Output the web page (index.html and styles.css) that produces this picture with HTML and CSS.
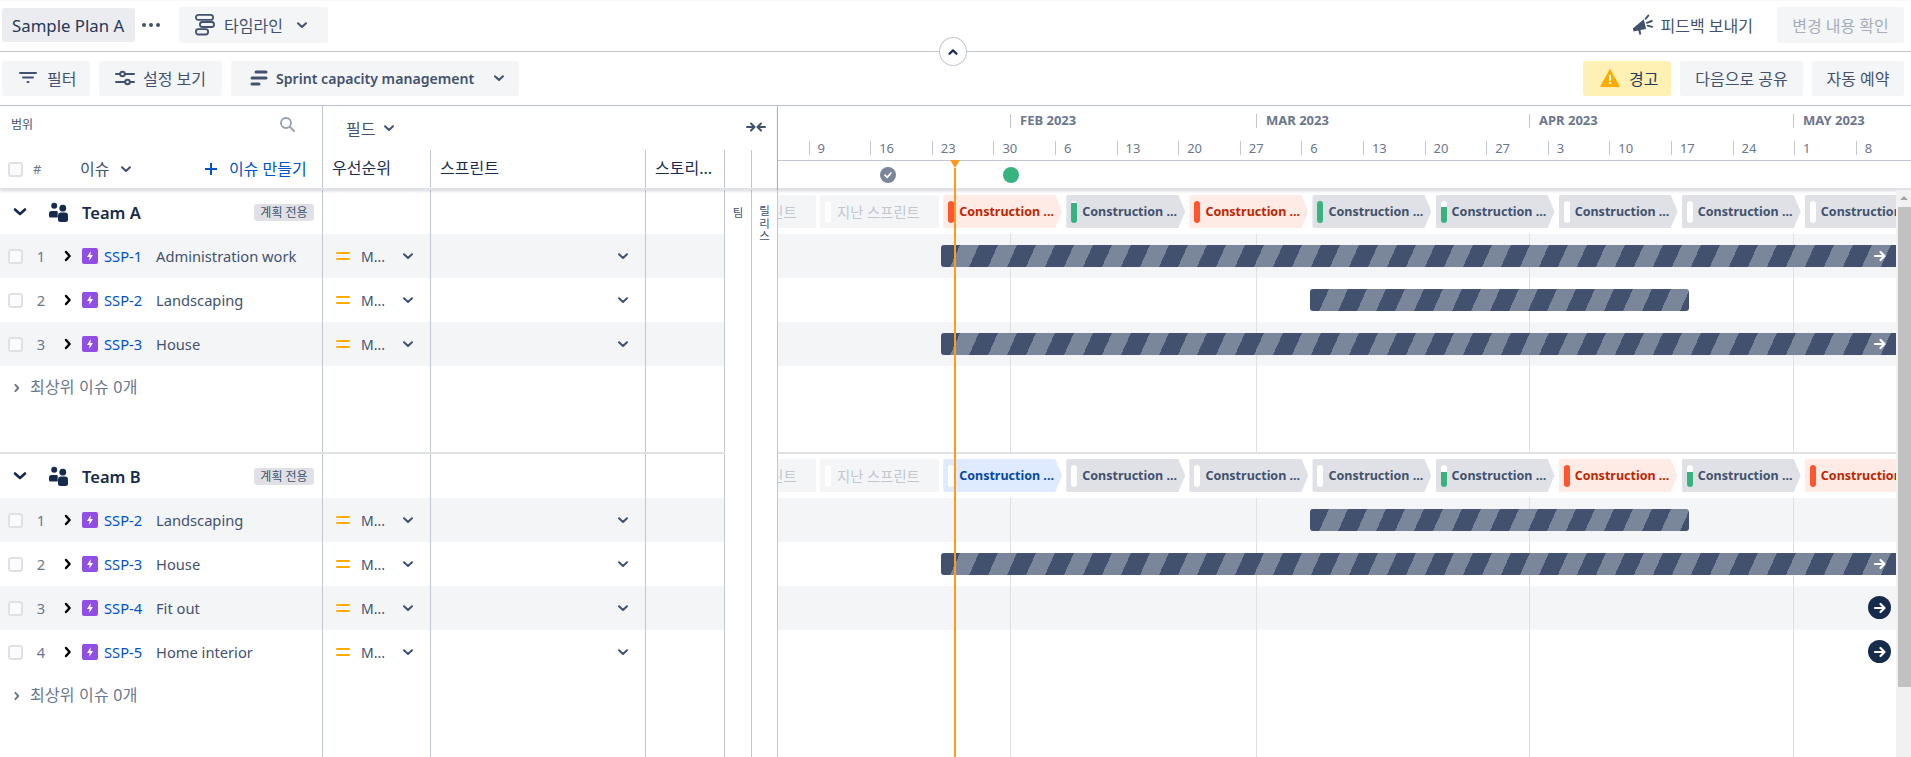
FILE: index.html
```html
<!DOCTYPE html>
<html lang="ko">
<head>
<meta charset="utf-8">
<title>Sample Plan A</title>
<link rel="stylesheet" href="styles.css">
</head>
<body>
<svg class="defs" width="0" height="0" aria-hidden="true">
  <symbol id="down" viewBox="0 0 16 16"><path d="M4 6.200 8 10l4-3.800" fill="none" stroke="currentColor" stroke-width="2" stroke-linecap="round" stroke-linejoin="round"/></symbol>
  <symbol id="team-down" viewBox="0 0 16 16"><path d="M3 5.500 8 10l5-4.500" fill="none" stroke="currentColor" stroke-width="2.600" stroke-linecap="round" stroke-linejoin="round"/></symbol>
  <symbol id="right" viewBox="0 0 8 12"><path d="M2 2l3.600 4L2 10" fill="none" stroke="currentColor" stroke-width="2.400" stroke-linecap="round" stroke-linejoin="round"/></symbol>
  <symbol id="bolt" viewBox="0 0 16 16"><rect width="16" height="16" rx="2" fill="#904ee2"/><path d="M8.900 3 5 9h2.600l-.5 4L11 7H8.400z" fill="#fff"/></symbol>
  <symbol id="eq" viewBox="0 0 14 12"><path d="M1 3h12M1 9h12" stroke="#ffab00" stroke-width="2" stroke-linecap="round"/></symbol>
  <symbol id="people" viewBox="0 0 20 20"><circle cx="5.200" cy="3.800" r="3" fill="#172b4d"/><circle cx="13.800" cy="6.200" r="3.400" fill="#172b4d"/><path d="M0 11.500a2.500 2.500 0 0 1 2.500-2.500h5.300c.6 0 .9.3.9.9v5.600H1.500A1.500 1.500 0 0 1 0 14z" fill="#172b4d"/><path d="M9 13.500a3 3 0 0 1 3-3h4a3 3 0 0 1 3 3v4a2.500 2.500 0 0 1-2.500 2.500h-5A2.500 2.500 0 0 1 9 17.500z" fill="#172b4d"/></symbol>
  <symbol id="arrow" viewBox="0 0 14 14"><path d="M2 7h9M7.500 3l4 4-4 4" fill="none" stroke="currentColor" stroke-width="2.200" stroke-linecap="round" stroke-linejoin="round"/></symbol>
</svg>

<header class="topbar">
  <div class="bar-side">
    <span class="btn plan-name">Sample Plan A</span>
    <span class="dots"><i></i><i></i><i></i></span>
    <span class="btn view-btn">
      <svg class="ic-timeline" viewBox="0 0 20 22"><g fill="none" stroke="#42526e" stroke-width="1.800"><rect x=".9" y=".9" width="17.200" height="5" rx="2.500"/><rect x="4.900" y="8" width="14.200" height="5" rx="2.500"/><rect x=".9" y="15.100" width="12.200" height="5.400" rx="2.500"/></g></svg>
      <span>타임라인</span>
      <svg class="ic16"><use href="#down"/></svg>
    </span>
  </div>
  <div class="bar-side">
    <span class="feedback">
      <svg class="ic-mega" viewBox="0 0 22 22"><path d="M.8 14.500 11.800 5.200l2.300 9.800-5.700 1.100.9 4.200-1.900.5-1.100-4.300-4.600.9z" fill="#42526e"/><path d="M14.800 8.800l5-1.800M13.600 4.800l2.700-3.200M15.600 11.600l4.600 1.200" stroke="#42526e" stroke-width="1.900" stroke-linecap="round"/></svg>
      <span>피드백 보내기</span>
    </span>
    <span class="btn review-btn">변경 내용 확인</span>
  </div>
</header>

<button class="collapse" type="button"><svg class="ic16" viewBox="0 0 16 16"><path d="M4.500 9.800 8 6.400l3.500 3.400" fill="none" stroke="#172b4d" stroke-width="2.200" stroke-linecap="round" stroke-linejoin="round"/></svg></button>

<section class="toolbar">
  <div class="bar-side tools-left">
    <span class="btn tool filter-btn"><svg class="ic-tool" viewBox="0 0 18 14"><path d="M1 2h16M4 6.500h10M8.500 11h1" stroke="#42526e" stroke-width="2" stroke-linecap="round"/></svg><span>필터</span></span>
    <span class="btn tool settings-btn"><svg class="ic-set" viewBox="0 0 20 16"><g fill="none" stroke="#42526e" stroke-width="2"><path d="M1 4h4M10 4h9M1 12h9M15 12h4" stroke-linecap="round"/><circle cx="7.500" cy="4" r="2.300"/><circle cx="12.500" cy="12" r="2.300"/></g></svg><span>설정 보기</span></span>
    <span class="btn tool capacity-btn"><svg class="ic-plan" viewBox="0 0 18 18"><path d="M6 3h10M2 9h14M2 15h7" stroke="#42526e" stroke-width="3" stroke-linecap="round"/></svg><span>Sprint capacity management</span><svg class="ic16"><use href="#down"/></svg></span>
  </div>
  <div class="bar-side tools-right">
    <span class="btn warn-btn"><svg class="ic-warn" viewBox="0 0 20 20"><path d="M10 1.500 19.300 18.500H.7z" fill="#ffab00" stroke="#ffab00" stroke-linejoin="round"/><path d="M10 7v5.500" stroke="#fff" stroke-width="2"/><circle cx="10" cy="15" r="1.200" fill="#fff"/></svg><span>경고</span></span>
    <span class="btn share-btn">다음으로 공유</span>
    <span class="btn auto-btn">자동 예약</span>
  </div>
</section>

<main class="main">
  <div class="tree">
    <div class="tree-head">
      <div class="head-top">
        <div class="scope"><span class="scope-label">범위</span><svg class="ic-search" viewBox="0 0 16 16"><circle cx="7" cy="7" r="5" fill="none" stroke="#97a0af" stroke-width="1.800"/><path d="m11 11 4 4" stroke="#97a0af" stroke-width="1.800" stroke-linecap="round"/></svg></div>
        <div class="fields"><span class="fields-btn"><span>필드</span><svg class="ic16"><use href="#down"/></svg></span><svg class="ic-collapse" viewBox="0 0 20 12"><path d="M1 6h7M5 2.500 8.500 6 5 9.500M19 6h-7M15 2.500 11.500 6l3.500 3.500" fill="none" stroke="#42526e" stroke-width="2" stroke-linecap="round" stroke-linejoin="round"/></svg></div>
      </div>
      <div class="head-cols">
        <div class="hcell h-issue"><span class="check"></span><span class="hash">#</span><span class="issue-sort"><span>이슈</span><svg class="ic16"><use href="#down"/></svg></span><span class="create"><svg class="ic-plus" viewBox="0 0 14 14"><path d="M7 1v12M1 7h12" stroke="#0052cc" stroke-width="2"/></svg><span>이슈 만들기</span></span></div>
        <div class="hcell">우선순위</div>
        <div class="hcell">스프린트</div>
        <div class="hcell">스토리...</div>
        <div class="hcell h-narrow"></div>
        <div class="hcell h-narrow2"></div>
      </div>
    </div>

    <div class="group group-a">
      <div class="group-rows">
        <div class="row team-row"><div class="cell c-issue"><svg class="team-chev"><use href="#team-down"/></svg><svg class="ic-people"><use href="#people"/></svg><span class="team-name">Team A</span><span class="badge">계획 전용</span></div><div class="cell"></div><div class="cell"></div><div class="cell"></div></div>
        <div class="row alt"><div class="cell c-issue"><span class="check"></span><span class="num">1</span><svg class="expand"><use href="#right"/></svg><svg class="ic-bolt"><use href="#bolt"/></svg><span class="key">SSP-1</span><span class="title">Administration work</span></div><div class="cell c-prio"><svg class="ic-eq"><use href="#eq"/></svg><span class="prio">M...</span><svg class="ic16 end"><use href="#down"/></svg></div><div class="cell c-sprint"><svg class="ic16 end"><use href="#down"/></svg></div><div class="cell"></div></div>
        <div class="row"><div class="cell c-issue"><span class="check"></span><span class="num">2</span><svg class="expand"><use href="#right"/></svg><svg class="ic-bolt"><use href="#bolt"/></svg><span class="key">SSP-2</span><span class="title">Landscaping</span></div><div class="cell c-prio"><svg class="ic-eq"><use href="#eq"/></svg><span class="prio">M...</span><svg class="ic16 end"><use href="#down"/></svg></div><div class="cell c-sprint"><svg class="ic16 end"><use href="#down"/></svg></div><div class="cell"></div></div>
        <div class="row alt"><div class="cell c-issue"><span class="check"></span><span class="num">3</span><svg class="expand"><use href="#right"/></svg><svg class="ic-bolt"><use href="#bolt"/></svg><span class="key">SSP-3</span><span class="title">House</span></div><div class="cell c-prio"><svg class="ic-eq"><use href="#eq"/></svg><span class="prio">M...</span><svg class="ic16 end"><use href="#down"/></svg></div><div class="cell c-sprint"><svg class="ic16 end"><use href="#down"/></svg></div><div class="cell"></div></div>
        <div class="row"><div class="cell c-issue"><svg class="more-chev"><use href="#right"/></svg><span class="more">최상위 이슈 0개</span></div><div class="cell"></div><div class="cell"></div><div class="cell"></div></div>
        <div class="row filler"><div class="cell"></div><div class="cell"></div><div class="cell"></div><div class="cell"></div></div>
      </div>
      <div class="label-col first"><span class="label-team">팀</span></div>
      <div class="label-col"><span class="label-release">릴리스</span></div>
    </div>

    <div class="group group-b">
      <div class="group-rows divided">
        <div class="row team-row"><div class="cell c-issue"><svg class="team-chev"><use href="#team-down"/></svg><svg class="ic-people"><use href="#people"/></svg><span class="team-name">Team B</span><span class="badge">계획 전용</span></div><div class="cell"></div><div class="cell"></div><div class="cell"></div></div>
        <div class="row alt"><div class="cell c-issue"><span class="check"></span><span class="num">1</span><svg class="expand"><use href="#right"/></svg><svg class="ic-bolt"><use href="#bolt"/></svg><span class="key">SSP-2</span><span class="title">Landscaping</span></div><div class="cell c-prio"><svg class="ic-eq"><use href="#eq"/></svg><span class="prio">M...</span><svg class="ic16 end"><use href="#down"/></svg></div><div class="cell c-sprint"><svg class="ic16 end"><use href="#down"/></svg></div><div class="cell"></div></div>
        <div class="row"><div class="cell c-issue"><span class="check"></span><span class="num">2</span><svg class="expand"><use href="#right"/></svg><svg class="ic-bolt"><use href="#bolt"/></svg><span class="key">SSP-3</span><span class="title">House</span></div><div class="cell c-prio"><svg class="ic-eq"><use href="#eq"/></svg><span class="prio">M...</span><svg class="ic16 end"><use href="#down"/></svg></div><div class="cell c-sprint"><svg class="ic16 end"><use href="#down"/></svg></div><div class="cell"></div></div>
        <div class="row alt"><div class="cell c-issue"><span class="check"></span><span class="num">3</span><svg class="expand"><use href="#right"/></svg><svg class="ic-bolt"><use href="#bolt"/></svg><span class="key">SSP-4</span><span class="title">Fit out</span></div><div class="cell c-prio"><svg class="ic-eq"><use href="#eq"/></svg><span class="prio">M...</span><svg class="ic16 end"><use href="#down"/></svg></div><div class="cell c-sprint"><svg class="ic16 end"><use href="#down"/></svg></div><div class="cell"></div></div>
        <div class="row"><div class="cell c-issue"><span class="check"></span><span class="num">4</span><svg class="expand"><use href="#right"/></svg><svg class="ic-bolt"><use href="#bolt"/></svg><span class="key">SSP-5</span><span class="title">Home interior</span></div><div class="cell c-prio"><svg class="ic-eq"><use href="#eq"/></svg><span class="prio">M...</span><svg class="ic16 end"><use href="#down"/></svg></div><div class="cell c-sprint"><svg class="ic16 end"><use href="#down"/></svg></div><div class="cell"></div></div>
        <div class="row"><div class="cell c-issue"><svg class="more-chev"><use href="#right"/></svg><span class="more">최상위 이슈 0개</span></div><div class="cell"></div><div class="cell"></div><div class="cell"></div></div>
        <div class="row filler"><div class="cell"></div><div class="cell"></div><div class="cell"></div><div class="cell"></div></div>
      </div>
      <div class="label-col first"></div>
      <div class="label-col"></div>
    </div>
  </div>

  <div class="gantt">
    <div class="gantt-head">
      <div class="months">
        <span class="month" style="width:246px">FEB 2023</span>
        <span class="month" style="width:273px">MAR 2023</span>
        <span class="month" style="width:264px">APR 2023</span>
        <span class="month" style="width:100px">MAY 2023</span>
      </div>
      <div class="weeks">
        <span class="week">9</span><span class="week">16</span><span class="week">23</span><span class="week">30</span><span class="week">6</span><span class="week">13</span><span class="week">20</span><span class="week">27</span><span class="week">6</span><span class="week">13</span><span class="week">20</span><span class="week">27</span><span class="week">3</span><span class="week">10</span><span class="week">17</span><span class="week">24</span><span class="week">1</span><span class="week">8</span>
      </div>
      <div class="markers">
        <span class="marker done"><svg viewBox="0 0 10 10"><path d="M2 5.200 4.200 7.400 8 3" fill="none" stroke="#fff" stroke-width="1.800" stroke-linecap="round" stroke-linejoin="round"/></svg></span>
        <span class="marker current"></span>
      </div>
    </div>
    <div class="today-tip"></div>
    <div class="today-line"></div>

    <div class="gantt-body">
      <div class="gantt-content">
        <div class="gantt-group group-a">
          <div class="chips">
            <span class="chip past"><i class="pip"></i>지난 스프린트</span>
            <span class="chip past"><i class="pip"></i>지난 스프린트</span>
            <span class="chip red"><i class="pip"></i>Construction ...</span>
            <span class="chip gray"><i class="pip g90"></i>Construction ...</span>
            <span class="chip red"><i class="pip"></i>Construction ...</span>
            <span class="chip gray"><i class="pip g100"></i>Construction ...</span>
            <span class="chip gray"><i class="pip g80"></i>Construction ...</span>
            <span class="chip gray"><i class="pip"></i>Construction ...</span>
            <span class="chip gray"><i class="pip"></i>Construction ...</span>
            <span class="chip gray"><i class="pip"></i>Construction ...</span>
          </div>
          <div class="lanes">
            <i class="gridline" style="left:232px"></i><i class="gridline" style="left:478px"></i><i class="gridline" style="left:751px"></i><i class="gridline" style="left:1015px"></i>
            <div class="lane alt"><div class="bar to-end" style="left:163px"><svg class="bar-arrow"><use href="#arrow"/></svg></div></div>
            <div class="lane"><div class="bar" style="left:532px;width:379px"></div></div>
            <div class="lane alt"><div class="bar to-end" style="left:163px"><svg class="bar-arrow"><use href="#arrow"/></svg></div></div>
          </div>
        </div>
        <div class="gantt-group group-b divided">
          <div class="chips">
            <span class="chip past"><i class="pip"></i>지난 스프린트</span>
            <span class="chip past"><i class="pip"></i>지난 스프린트</span>
            <span class="chip blue"><i class="pip"></i>Construction ...</span>
            <span class="chip gray"><i class="pip"></i>Construction ...</span>
            <span class="chip gray"><i class="pip"></i>Construction ...</span>
            <span class="chip gray"><i class="pip"></i>Construction ...</span>
            <span class="chip gray"><i class="pip g70"></i>Construction ...</span>
            <span class="chip red"><i class="pip"></i>Construction ...</span>
            <span class="chip gray"><i class="pip g70"></i>Construction ...</span>
            <span class="chip red"><i class="pip"></i>Construction ...</span>
          </div>
          <div class="lanes">
            <i class="gridline" style="left:232px"></i><i class="gridline" style="left:478px"></i><i class="gridline" style="left:751px"></i><i class="gridline" style="left:1015px"></i>
            <div class="lane alt"><div class="bar" style="left:532px;width:379px"></div></div>
            <div class="lane"><div class="bar to-end" style="left:163px"><svg class="bar-arrow"><use href="#arrow"/></svg></div></div>
            <div class="lane alt"><span class="round-arrow"><svg><use href="#arrow"/></svg></span></div>
            <div class="lane"><span class="round-arrow"><svg><use href="#arrow"/></svg></span></div>
          </div>
        </div>
      </div>
      <div class="scrollbar"><span class="scroll-up"></span><span class="scroll-thumb"></span></div>
    </div>
  </div>
</main>
</body>
</html>
```

FILE: styles.css
```css
* { box-sizing: border-box; }
html, body { margin: 0; height: 757px; overflow: hidden; background: #fff; }
body { font-family: "Noto Sans", "Noto Sans CJK KR", sans-serif; font-size: 14.700px; color: #42526e; position: relative; }
.defs { display: block; height: 0; }
svg { display: block; flex: none; }
i { font-style: normal; }
.ic16 { width: 16px; height: 16px; color: #42526e; }

/* Top bars */
.topbar { height: 52px; border-top: 1px solid #f7f8f9; border-bottom: 1px solid #c1c7d0; display: flex; justify-content: space-between; align-items: center; padding: 0 7px 2px 2px; }
.toolbar { height: 54px; border-bottom: 1px solid #c1c7d0; display: flex; justify-content: space-between; align-items: center; padding: 0 7px 1px 2px; }
.bar-side { display: flex; align-items: center; }
.btn { display: flex; align-items: center; border-radius: 3px; background: #f4f5f7; color: #42526e; white-space: nowrap; }
.plan-name { width: 133px; height: 34px; background: #ebecf0; padding-left: 10px; font-size: 16.800px; color: #253858; }
.dots { display: flex; gap: 3px; width: 44px; padding-left: 7px; }
.dots i { width: 4px; height: 4px; border-radius: 50%; background: #42526e; }
.view-btn { width: 149px; height: 36px; padding-left: 16px; font-size: 16px; gap: 9px; }
.ic-timeline { width: 20px; height: 22px; }
.view-btn span { width: 61px; }
.feedback { display: flex; align-items: center; gap: 7px; margin-right: 24px; color: #42526e; font-size: 16px; }
.ic-mega { width: 22px; height: 22px; }
.review-btn { width: 127px; height: 36px; justify-content: center; color: #a5adba; font-size: 16px; }
.tools-left { gap: 9px; }
.tools-right { gap: 9px; }
.tool { height: 35px; font-size: 16px; }
.filter-btn { width: 88px; padding-left: 17px; gap: 10px; }
.ic-tool { width: 18px; height: 14px; }
.settings-btn { width: 123px; padding-left: 16px; gap: 8px; }
.ic-set { width: 20px; height: 16px; }
.capacity-btn { width: 288px; padding-left: 19px; gap: 8px; font-weight: 600; font-size: 14.100px; }
.capacity-btn .ic16 { margin-left: 9px; }
.ic-plan { width: 18px; height: 18px; }
.warn-btn { width: 88px; height: 35px; background: #fff0b3; padding-left: 17px; gap: 9px; color: #253858; font-size: 16px; }
.ic-warn { width: 20px; height: 20px; }
.share-btn { width: 123px; height: 35px; justify-content: center; font-size: 16px; }
.auto-btn { width: 92px; height: 35px; justify-content: center; font-size: 16px; }
.collapse { position: absolute; left: 939px; top: 37px; width: 28px; height: 29px; padding: 0; border: 1px solid #c1c7d0; border-radius: 50%; background: #fff; display: flex; align-items: center; justify-content: center; z-index: 5; }

/* Layout */
.main { display: flex; height: 651px; }
.tree { width: 778px; flex: none; border-right: 1px solid #c1c7d0; display: flex; flex-direction: column; }
.gantt { flex: 1; min-width: 0; display: flex; flex-direction: column; position: relative; }

/* Tree header */
.tree-head { height: 84px; border-bottom: 2px solid #dfe1e6; box-shadow: 0 1px 3px rgba(9,30,66,.18); position: relative; z-index: 2; background: #fff; }
.head-top { height: 44px; display: flex; }
.scope { width: 323px; border-right: 1px solid #c1c7d0; display: flex; align-items: flex-start; justify-content: space-between; padding: 9px 27px 0 11px; }
.scope-label { font-size: 12px; line-height: 20px; color: #42526e; }
.ic-search { width: 16px; height: 16px; margin-top: 1px; }
.fields { flex: 1; display: flex; justify-content: space-between; padding: 12px 11px 0 23px; }
.fields-btn { display: flex; gap: 6px; align-items: center; height: 20px; font-size: 16px; color: #42526e; }
.ic-collapse { width: 20px; height: 12px; margin-top: 3px; }
.head-cols, .row { display: grid; grid-template-columns: 323px 108px 215px 79px; }
.head-cols { grid-template-columns: 323px 108px 215px 79px 27px 26px; height: 38px; }
.hcell { border-right: 1px solid #c1c7d0; padding: 0 9px; font-size: 16px; line-height: 36px; color: #172b4d; white-space: nowrap; overflow: hidden; }
.hcell:last-child { border-right: 0; }
.h-issue { display: flex; align-items: center; padding: 0 0 0 8px; color: #42526e; }
.hash { width: 47px; margin-left: 10px; font-size: 13px; color: #6b778c; }
.issue-sort { display: flex; align-items: center; gap: 9px; width: 124px; }
.create { display: flex; align-items: center; gap: 11px; color: #0052cc; white-space: nowrap; }
.ic-plus { width: 14px; height: 14px; }

/* Rows */
.group { display: flex; }
.tree .group-a { height: 262px; }
.tree .group-b { flex: 1; }
.group-rows { width: 725px; flex: none; display: flex; flex-direction: column; }
.group-rows.divided { border-top: 2px solid #dfe1e6; }
.label-col { flex: 1; display: flex; justify-content: center; padding-top: 15px; font-size: 11.500px; color: #42526e; }
.label-col.first { width: 27px; flex: none; border-right: 1px solid #c1c7d0; }
.label-team { line-height: 16px; height: 16px; }
.label-release { width: 12px; height: 42px; line-height: 12.500px; word-break: break-all; text-align: center; }
.row { height: 44px; }
.row.alt { background: #f4f5f7; }
.row.filler { flex: 1; }
.cell { border-right: 1px solid #c1c7d0; display: flex; align-items: center; min-width: 0; }
.c-issue { padding-left: 8px; }
.c-prio { padding: 0 14px 0 13px; }
.c-sprint { padding-right: 14px; }
.end { margin-left: auto; }
.check { width: 15px; height: 15px; flex: none; border: 2px solid #dfe1e6; border-radius: 3px; background: #fafbfc; }
.num { width: 34px; text-align: center; color: #6b778c; margin-left: 1px; }
.expand { width: 8px; height: 12px; color: #000; margin-left: 6px; }
.ic-bolt { width: 16px; height: 16px; margin: 0 6px 0 10px; }
.key { width: 52px; color: #0052cc; flex: none; white-space: nowrap; }
.title { color: #42526e; white-space: nowrap; }
.ic-eq { width: 14px; height: 12px; }
.prio { margin-left: 11px; color: #42526e; font-size: 14px; }
.team-chev { width: 16px; height: 16px; margin-left: 4px; color: #172b4d; }
.ic-people { width: 20px; height: 20px; margin-left: 21px; }
.team-name { margin-left: 13px; font-size: 16.500px; font-weight: 600; color: #172b4d; }
.badge { margin: 0 8px 0 auto; width: 60px; height: 17px; line-height: 17px; border-radius: 3px; background: #dfe1e6; text-align: center; font-size: 12px; color: #42526e; }
.more-chev { width: 8px; height: 12px; color: #6b778c; margin-left: 5px; transform: scale(.8); }
.more { margin-left: 9px; color: #6b778c; font-size: 16px; letter-spacing: .2px; line-height: 20px; margin-top: -2px; }

/* Gantt header */
.gantt-head { height: 84px; border-bottom: 2px solid #dfe1e6; box-shadow: 0 1px 3px rgba(9,30,66,.18); position: relative; z-index: 2; background: #fff; flex: none; }
.months { display: flex; height: 35px; padding: 8px 0 0 232px; }
.month { flex: none; height: 14px; border-left: 1px solid #c1c7d0; padding-left: 9px; font-size: 13px; line-height: 12px; font-weight: 700; color: #6b778c; white-space: nowrap; }
.weeks { display: flex; height: 20px; padding-left: 30.600px; border-bottom: 1px solid #c1c7d0; }
.week { width: 61.600px; flex: none; height: 14px; border-left: 1px solid #c1c7d0; padding-left: 8px; font-size: 13px; line-height: 14px; color: #6b778c; }
.markers { display: flex; align-items: center; height: 27px; padding-left: 102px; gap: 107px; }
.marker { width: 16px; height: 16px; border-radius: 50%; display: flex; align-items: center; justify-content: center; flex: none; }
.marker svg { width: 10px; height: 10px; }
.marker.done { background: #7a869a; }
.marker.current { background: #36b37e; }
.today-tip { position: absolute; left: 172px; top: 54px; width: 0; height: 0; border: 5px solid transparent; border-top: 8px solid #ff991f; border-bottom: 0; z-index: 4; }
.today-line { position: absolute; left: 176px; top: 62px; bottom: 0; width: 2px; background: #ff991f; z-index: 4; }

/* Gantt body */
.gantt-body { flex: 1; min-height: 0; display: flex; }
.gantt-content { width: 1118px; flex: none; display: flex; flex-direction: column; overflow: hidden; }
.gantt-group { display: flex; flex-direction: column; }
.gantt-content .group-a { height: 262px; }
.gantt-content .group-b { flex: 1; }
.gantt-group.divided { border-top: 2px solid #dfe1e6; }
.chips { height: 44px; flex: none; display: flex; gap: 4.100px; padding-top: 5px; margin-left: -81px; overflow: visible; }
.chip { width: 119px; height: 33px; flex: none; display: flex; align-items: center; gap: 5px; padding-left: 5px; font-size: 12.500px; font-weight: 700; white-space: nowrap; clip-path: polygon(3px 0, calc(100% - 7px) 0, 100% 50%, calc(100% - 7px) 100%, 3px 100%, 1px 99%, 0 97%, 0 3%, 1px 1%); }
.pip { width: 6px; height: 22px; border-radius: 3px; background: #fff; flex: none; }
.chip.past { background: #f4f5f7; color: #c1c7d0; font-size: 14.300px; font-weight: 400; border-radius: 3px; clip-path: none; gap: 6px; }
.chip.red { background: #ffebe6; color: #bf2600; }
.chip.red .pip { background: #ff5630; }
.chip.gray { background: #dfe1e6; color: #42526e; }
.chip.blue { background: #deebff; color: #0747a6; }
.g100 { background: #36b37e; }
.g90 { background: linear-gradient(#fff 10%, #36b37e 10%); }
.g80 { background: linear-gradient(#fff 25%, #36b37e 25%); }
.g70 { background: linear-gradient(#fff 30%, #36b37e 30%); }
.lanes { position: relative; flex: 1; }
.gridline { position: absolute; top: 0; bottom: 0; width: 1px; background: #dfe1e6; z-index: 1; }
.lane { height: 44px; position: relative; }
.lane.alt { background: #f4f5f7; }
.bar { position: absolute; top: 11px; height: 22px; border-radius: 3px; z-index: 2; background: repeating-linear-gradient(114.400deg, #42526e 0 17.300px, #7a869a 17.300px 34.600px); }
.bar.to-end { right: 0; border-radius: 3px 0 0 3px; display: flex; justify-content: flex-end; align-items: center; padding-right: 9px; }
.bar-arrow { width: 14px; height: 14px; color: #fff; }
.round-arrow { position: absolute; left: 1090px; top: 10px; width: 23px; height: 23px; border-radius: 50%; background: #172b4d; color: #fff; display: flex; align-items: center; justify-content: center; z-index: 2; }
.round-arrow svg { width: 14px; height: 14px; }

/* Scrollbar */
.scrollbar { width: 15px; flex: none; background: #f1f1f1; display: flex; flex-direction: column; align-items: flex-end; position: relative; z-index: 3; }
.scroll-up { width: 13px; height: 17px; padding: 6px 0 0 2px; }
.scroll-up::before { content: ""; display: block; width: 0; height: 0; border: 4px solid transparent; border-top: 0; border-bottom: 4px solid #a3a3a3; }
.scroll-thumb { width: 13px; height: 480px; background: #c1c1c1; }
```
